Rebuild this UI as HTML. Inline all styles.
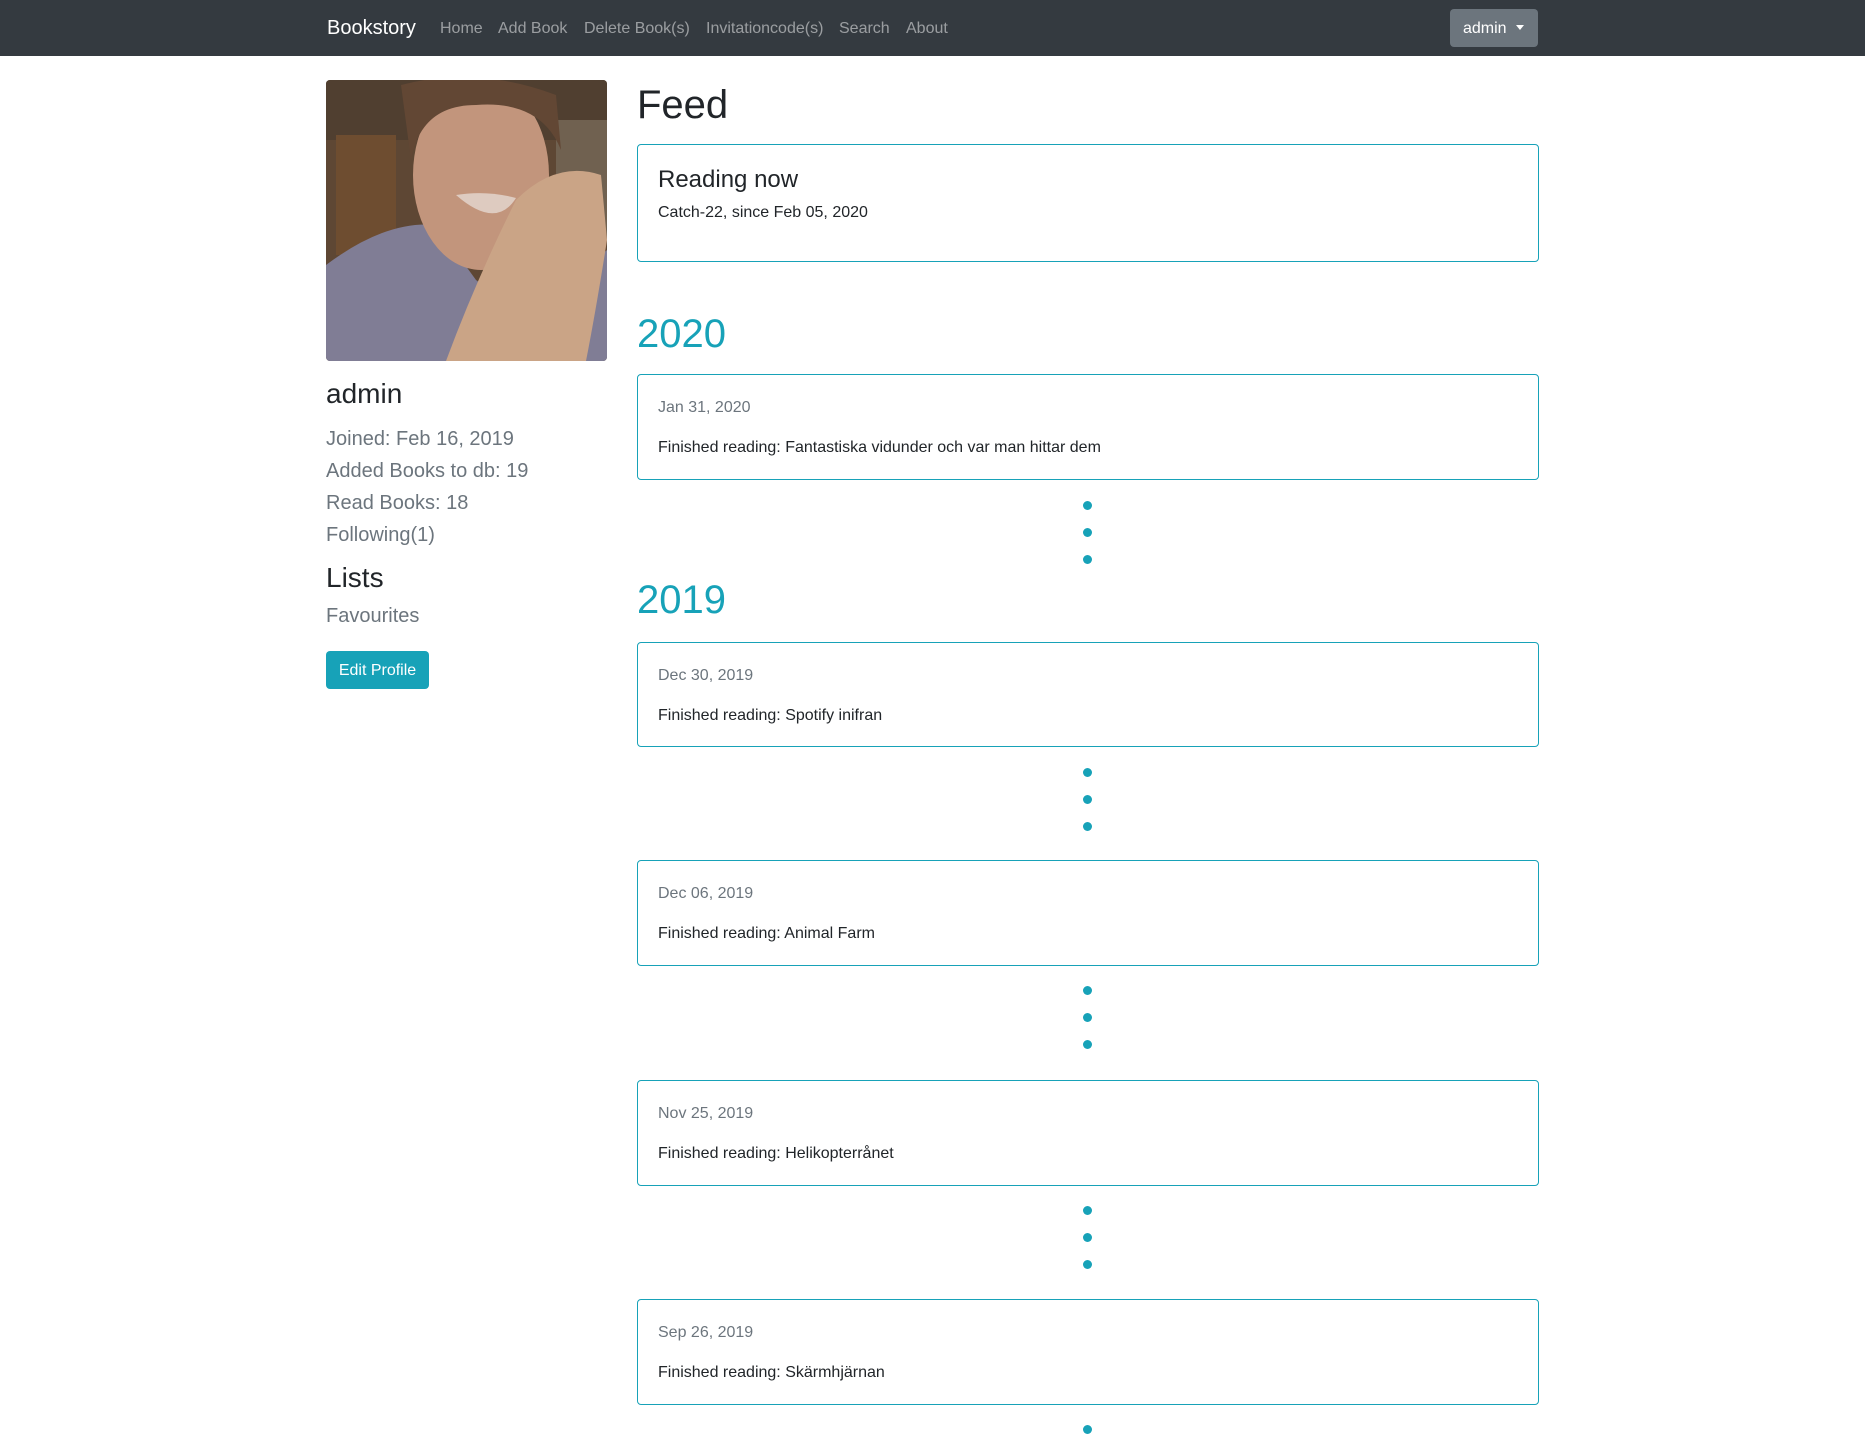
<!DOCTYPE html>
<html><head><meta charset="utf-8"><style>
*{margin:0;padding:0;box-sizing:border-box}
body{width:1865px;height:1445px;background:#fff;font-family:"Liberation Sans",Arial,sans-serif;position:relative;overflow:hidden;color:#212529}
.a{position:absolute;line-height:1;white-space:nowrap}
.nav{position:absolute;left:0;top:0;width:1865px;height:56px;background:#343a40}
.nl{color:rgba(255,255,255,.5);font-size:16px;top:21px}
.card{position:absolute;left:637px;width:902px;border:1px solid #17a2b8;border-radius:4px}
.date{position:absolute;left:20px;top:25px;font-size:16px;color:#6c757d;line-height:1}
.txt{position:absolute;left:20px;top:65px;font-size:16px;line-height:1}
.dot{position:absolute;left:1083px;width:9px;height:9px;border-radius:50%;background:#17a2b8}
.yr{font-size:40px;color:#17a2b8}
.ls{font-size:20px;color:#6c757d;left:326px}
</style></head><body>
<div class="nav"></div>
<div class="a" style="left:327px;top:18px;font-size:20px;color:#fff">Bookstory</div>
<div class="a nl" style="left:440px">Home</div>
<div class="a nl" style="left:498px">Add Book</div>
<div class="a nl" style="left:584px">Delete Book(s)</div>
<div class="a nl" style="left:706px">Invitationcode(s)</div>
<div class="a nl" style="left:839px">Search</div>
<div class="a nl" style="left:906px">About</div>
<div style="position:absolute;left:1450px;top:9px;width:88px;height:38px;background:#6c757d;border-radius:4px"></div>
<div class="a" style="left:1463px;top:21px;font-size:16px;color:#fff">admin</div>
<div style="position:absolute;left:1516px;top:25px;width:0;height:0;border-left:4px solid transparent;border-right:4px solid transparent;border-top:5px solid #fff"></div>

<svg style="position:absolute;left:326px;top:80px" width="281" height="281" viewBox="0 0 281 281">
<defs><clipPath id="c"><rect width="281" height="281" rx="4"/></clipPath></defs>
<g clip-path="url(#c)">
<rect width="281" height="281" fill="#5a4330"/>
<rect x="0" y="0" width="281" height="60" fill="#4a3a2c"/>
<rect x="10" y="55" width="60" height="120" fill="#6b4a2c"/>
<rect x="230" y="40" width="51" height="120" fill="#6e6050"/>
<path d="M0 185 Q60 140 110 145 L150 200 L200 240 L281 170 L281 281 L0 281Z" fill="#7f7f9c"/>
<ellipse cx="155" cy="95" rx="68" ry="95" fill="#c99a80"/>
<path d="M75 5 Q150 -15 230 15 L235 70 Q215 20 150 25 Q95 25 85 80Z" fill="#5e4330"/>
<path d="M120 281 Q150 200 190 120 Q230 80 275 95 L281 160 Q270 230 260 281Z" fill="#d2ab8c"/>
<path d="M130 115 Q160 110 190 118 Q170 150 130 115Z" fill="#e8d6cc"/>
<rect x="0" y="0" width="281" height="281" fill="#8a6a5a" opacity=".1"/>
</g></svg>

<div class="a" style="left:326px;top:380px;font-size:28px">admin</div>
<div class="a ls" style="top:429px">Joined: Feb 16, 2019</div>
<div class="a ls" style="top:461px">Added Books to db: 19</div>
<div class="a ls" style="top:493px">Read Books: 18</div>
<div class="a ls" style="top:525px">Following(1)</div>
<div class="a" style="left:326px;top:564px;font-size:28px">Lists</div>
<div class="a ls" style="top:606px">Favourites</div>
<div style="position:absolute;left:326px;top:651px;width:103px;height:38px;background:#17a2b8;border-radius:4px;color:#fff;font-size:16px;line-height:39px;text-align:center">Edit Profile</div>

<div class="a" style="left:637px;top:85px;font-size:40px">Feed</div>
<div class="card" style="top:144px;height:118px">
<div class="a" style="left:20px;top:23px;font-size:24px">Reading now</div>
<div class="a" style="left:20px;top:60px;font-size:16px">Catch-22, since Feb 05, 2020</div>
</div>
<div class="a yr" style="left:637px;top:314px">2020</div>
<div class="card" style="top:374px;height:106px"><div class="date">Jan 31, 2020</div><div class="txt">Finished reading: Fantastiska vidunder och var man hittar dem</div></div>
<div class="dot" style="top:501px"></div><div class="dot" style="top:528px"></div><div class="dot" style="top:555px"></div>
<div class="a yr" style="left:637px;top:580px">2019</div>
<div class="card" style="top:642px;height:105px"><div class="date">Dec 30, 2019</div><div class="txt">Finished reading: Spotify inifran</div></div>
<div class="dot" style="top:768px"></div><div class="dot" style="top:795px"></div><div class="dot" style="top:822px"></div>
<div class="card" style="top:860px;height:106px"><div class="date">Dec 06, 2019</div><div class="txt">Finished reading: Animal Farm</div></div>
<div class="dot" style="top:986px"></div><div class="dot" style="top:1013px"></div><div class="dot" style="top:1040px"></div>
<div class="card" style="top:1080px;height:106px"><div class="date">Nov 25, 2019</div><div class="txt">Finished reading: Helikopterrånet</div></div>
<div class="dot" style="top:1206px"></div><div class="dot" style="top:1233px"></div><div class="dot" style="top:1260px"></div>
<div class="card" style="top:1299px;height:106px"><div class="date">Sep 26, 2019</div><div class="txt">Finished reading: Skärmhjärnan</div></div>
<div class="dot" style="top:1425px"></div>
</body></html>
